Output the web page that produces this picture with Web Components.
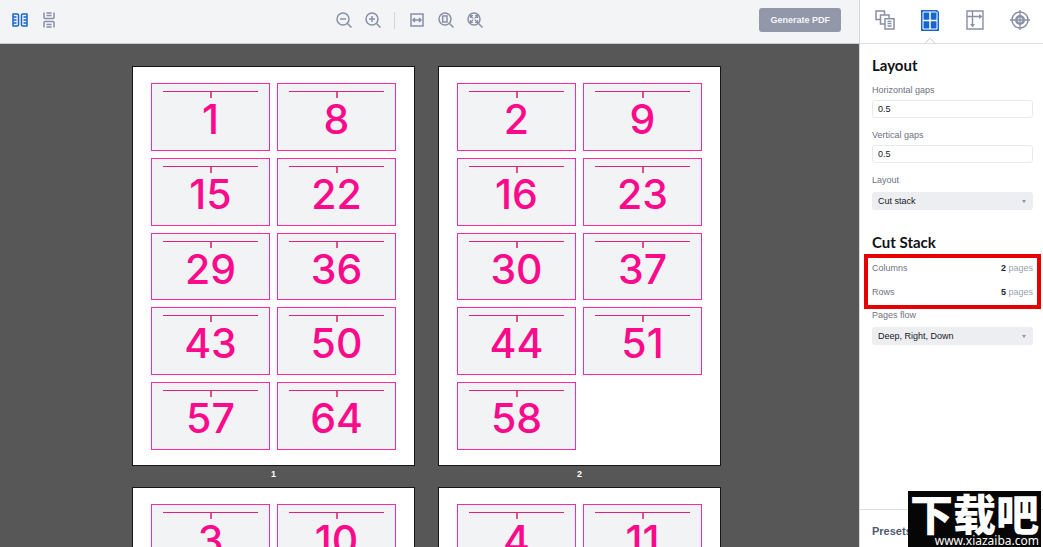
<!DOCTYPE html>
<html lang="en">
<head>
<meta charset="utf-8">
<title>Imposition</title>
<style>
html, body { height: 100%; margin: 0; }
body { font-family: "Liberation Sans", Arial, sans-serif; font-size: 9px; overflow: hidden; }
</style>
</head>
<body>
<imposition-app></imposition-app>
<script>
const define = (name, html, setup) => {
  const template = document.createElement('template');
  template.innerHTML = '<style>*{box-sizing:border-box}</style>' + html;
  customElements.define(name, class extends HTMLElement {
    constructor() {
      super();
      this.attachShadow({ mode: 'open' }).append(template.content.cloneNode(true));
    }
    connectedCallback() { if (setup) setup(this, this.shadowRoot); }
  });
};

/* Each icon: width, height, body */
const ICONS = {
  spread: [16, 14, '<path d="M.5 1H5q1.500 0 1.500 1v10q0 1-1.500 1H.5M15.500 1H11q-1.500 0-1.500 1v10q0 1 1.500 1h4.500M1 4h3.500M1 7h3.500M1 10h3.500M11.500 4H15M11.500 7H15M11.500 10H15M1 1v12M15 1v12"/>'],
  single: [12, 16, '<path d="M1 .5v5q0 1 1 1h8q1 0 1-1v-5M1 15.500v-5q0-1 1-1h8q1 0 1 1v5M3.500 1h5M3.500 3.500h5M3.500 12.500h5M3.500 15h5"/>'],
  minus: [16, 16, '<circle cx="7" cy="7" r="6"/><path d="M4 7h6M11.500 11.500l4 4"/>'],
  plus: [16, 16, '<circle cx="7" cy="7" r="6"/><path d="M4 7h6M7 4v6M11.500 11.500l4 4"/>'],
  width: [14, 14, '<path d="M1 1h12v12H1zM3 7h8M5 5L3 7l2 2M9 5l2 2-2 2"/>'],
  page: [16, 16, '<circle cx="7" cy="7" r="6"/><path d="M4.700 4H9v6H4.700zM11.500 11.500l4 4"/>'],
  fit: [16, 16, '<circle cx="7" cy="7" r="6"/><path stroke-width="1.200" d="M4 4l2.300 2.300M10 4L7.700 6.300M4 10l2.300-2.300M10 10L7.700 7.700M3.500 6V3.500H6M8 3.500h2.500V6M10.500 8v2.500H8M6 10.500H3.500V8"/><path d="M11.500 11.500l4 4"/>'],
  sheets: [20, 20, '<path d="M5.500 9.500H1V1h8.500v4M10 14H5.500V5H14v3.500M10 8.700h9V19h-9z"/><path d="M12.500 11.500h4M12.500 13.700h4M12.500 16h4" stroke-width="1.300"/>'],
  grid: [18, 21, '<path fill="currentColor" stroke="none" d="M0 0h16l2 2v19H0z"/><path d="M2 2h13.500l.5.500V19H2z" stroke="#fff" stroke-width="1"/><path d="M9 2v17M2 10.500h14" stroke="#fff" stroke-width="1.500"/>'],
  marks: [18, 20, '<path stroke-width="1.400" d="M1 1h16v18H1zM1 6.500h15M6.500 1v16"/><path d="M13 4l3 2.500L13 9zM4 14h5l-2.500 3z" fill="currentColor" stroke="none"/>'],
  target: [20, 20, '<circle cx="10" cy="10" r="8"/><circle cx="10" cy="10" r="3.600" stroke-width="2.800"/><path d="M10 7.500v5M7.500 10h5" stroke="#fff" stroke-width="2.400"/><path d="M10 0v20M0 10h20" stroke-width="1.300"/>']
};
define('app-icon', `<style>
:host{display:block;flex:none}
span{display:block}
svg{display:block;fill:none;stroke:currentColor;stroke-width:1.5}
</style><span></span>`, (el, root) => {
  const [w, h, body] = ICONS[el.getAttribute('name')];
  root.querySelector('span').innerHTML = `<svg width="${w}" height="${h}" viewBox="0 0 ${w} ${h}" aria-hidden="true">${body}</svg>`;
});

define('icon-button', `<style>
:host{display:block;width:29px;height:29px;color:#8890a6}
:host([active]){color:#1765cf}
button{display:grid;place-items:center;width:100%;height:100%;padding:0;border:0;background:none;color:inherit}
</style><button type="button"></button>`, (el, root) => {
  const button = root.querySelector('button');
  button.setAttribute('aria-label', el.getAttribute('label'));
  const icon = document.createElement('app-icon');
  icon.setAttribute('name', el.getAttribute('name'));
  button.replaceChildren(icon);
});

define('top-toolbar', `<style>
:host{display:flex;align-items:center;justify-content:space-between;height:44px;padding:0 18px 3px 5px;background:#f2f4f6;border-bottom:1px solid #c9ced2}
div{display:flex;align-items:center}
.zoom{margin-right:4px}
i{width:1px;height:17px;margin:0 7px;background:#d2d6dc}
.primary{height:24px;padding:0 11px;border:0;border-radius:3px;background:#9297a9;color:#f4f5f8;font:bold 9px/24px "Liberation Sans",Arial,sans-serif}
</style>
<div><icon-button name="spread" label="Spread view" active></icon-button><icon-button name="single" label="Continuous view"></icon-button></div>
<div class="zoom"><icon-button name="minus" label="Zoom out"></icon-button><icon-button name="plus" label="Zoom in"></icon-button><i></i><icon-button name="width" label="Fit width"></icon-button><icon-button name="page" label="Fit page"></icon-button><icon-button name="fit" label="Fit all"></icon-button></div>
<button class="primary" type="button">Generate PDF</button>`);

define('page-card', `<style>
:host{display:flex;flex-direction:column;align-items:center;border:1px solid #ff2a9d;background:#f1f3f5;min-height:0;padding:7px 11px 0;color:#fb0a8b}
i{width:100%;height:1px;background:#e0207f;flex:none}
b{width:2px;height:6px;background:#e0508f;flex:none}
span{font:500 41px/42px Inter,Roboto,sans-serif}
</style><i></i><b></b><span><slot></slot></span>`);

define('sheet-preview', `<style>
:host{display:block}
figure{margin:0}
.sheet{display:grid;grid-template:repeat(5,1fr)/repeat(2,1fr);gap:7px;height:398px;padding:16px 18px 15px;background:#fff;outline:1px solid #161616}
figcaption{height:23px;font-weight:bold;line-height:18px;text-align:center;color:#fff}
</style><figure><div class="sheet"></div><figcaption></figcaption></figure>`, (el, root) => {
  root.querySelector('.sheet').replaceChildren(...el.getAttribute('pages').split(' ').map(n => {
    const card = document.createElement('page-card');
    card.textContent = n;
    return card;
  }));
  root.querySelector('figcaption').textContent = el.getAttribute('number');
});

define('sheet-stage', `<style>
:host{display:grid;grid-template-columns:repeat(2,281px);justify-content:center;align-content:start;column-gap:25px;min-height:0;overflow:hidden;padding:23px 6px 0 0;background:#575757}
</style>
<sheet-preview number="1" pages="1 8 15 22 29 36 43 50 57 64"></sheet-preview>
<sheet-preview number="2" pages="2 9 16 23 30 37 44 51 58"></sheet-preview>
<sheet-preview number="3" pages="3 10"></sheet-preview>
<sheet-preview number="4" pages="4 11"></sheet-preview>`);

const FIELD = `:host{display:block}
label{display:block;line-height:12px;color:#6e737f}`;
define('text-field', `<style>${FIELD}
input{display:block;width:100%;height:18px;margin-top:4px;padding:0 5px;border:1px solid #e8eaee;border-radius:3px;background:#fff;color:#17181c;font:inherit}
</style><label for="f"></label><input id="f" type="text">`, (el, root) => {
  root.querySelector('label').textContent = el.getAttribute('label');
  root.querySelector('input').value = el.getAttribute('value');
});
define('select-field', `<style>${FIELD}
div{display:grid;align-items:center;margin-top:6px;border-radius:3px;background:#eceef1}
select,svg{grid-area:1/1}
select{appearance:none;width:100%;height:18px;padding:0 6px;border:0;background:none;color:#17181c;font:inherit}
svg{justify-self:end;margin-right:7px;fill:#8d93a3;pointer-events:none}
</style><label for="f"></label><div><select id="f"><option></option></select><svg width="4" height="3" viewBox="0 0 4 3" aria-hidden="true"><path d="M0 0h4L2 3z"/></svg></div>`, (el, root) => {
  root.querySelector('label').textContent = el.getAttribute('label');
  root.querySelector('option').textContent = el.getAttribute('value');
});
define('count-row', `<style>
:host{display:flex;justify-content:space-between;line-height:24px;color:#6e737f}
b{color:#22242b}
.unit{color:#9a9fae}
</style><span class="name"></span><span class="unit"><b></b> pages</span>`, (el, root) => {
  root.querySelector('.name').textContent = el.getAttribute('label');
  root.querySelector('b').textContent = el.getAttribute('value');
});

define('side-tabs', `<style>
:host{display:flex;height:44px;padding:0 0 3px 2px;border-bottom:1px solid #dcdee2}
icon-button{flex:1;height:40px;position:relative}
icon-button[active]::after{content:"";position:absolute;left:50%;bottom:-7px;width:7px;height:7px;margin-left:-4px;border:solid #cfd2d8;border-width:1px 0 0 1px;background:#fff;transform:rotate(45deg);clip-path:polygon(0 0,100% 0,0 100%)}
</style><icon-button name="sheets" label="Pages"></icon-button><icon-button name="grid" label="Layout" active></icon-button><icon-button name="marks" label="Margins"></icon-button><icon-button name="target" label="Marks"></icon-button>`);

define('side-panel', `<style>
:host{display:flex;flex-direction:column;min-height:0;border-left:1px solid #d5d8dc;background:#fff}
section{padding:11px 10px 0 12px}
section + section{padding-top:22px}
h2{margin:0;font:bold 15px/20px Lato,sans-serif;color:#111216}
.fields{display:grid;gap:11px;padding-top:9px}
.counts{position:relative;margin:4px 0 5px}
.counts::after{content:"";position:absolute;inset:-2px -8px -5px;border:4px solid #e60000;pointer-events:none}
footer{margin-top:auto;height:38px;padding-left:12px;border-top:1px solid #dcdee2;font-weight:bold;font-size:11px;line-height:42px;color:#4f5a70}
</style>
<side-tabs></side-tabs>
<section><h2>Layout</h2><div class="fields">
<text-field label="Horizontal gaps" value="0.5"></text-field>
<text-field label="Vertical gaps" value="0.5"></text-field>
<select-field label="Layout" value="Cut stack"></select-field></div></section>
<section><h2>Cut Stack</h2>
<div class="counts"><count-row label="Columns" value="2"></count-row><count-row label="Rows" value="5"></count-row></div>
<select-field label="Pages flow" value="Deep, Right, Down"></select-field></section>
<footer>Presets</footer>`);

define('site-badge', `<style>
:host{position:absolute;right:2px;bottom:0;width:133px;height:56px;background:#060606;color:#fff;overflow:hidden}
strong{display:block;height:42px;font:900 43px/42px "Noto Sans CJK SC",sans-serif;text-align:center;white-space:nowrap}
span{display:block;padding-right:2px;font:12px/16px "Noto Sans","Open Sans",sans-serif;text-align:right}
</style><strong lang="zh">下载吧</strong><span>www.xiazaiba.com</span>`);

define('imposition-app', `<style>
:host{position:relative;display:grid;grid-template:auto 1fr/1fr 184px;height:100vh;overflow:hidden}
side-panel{grid-area:1/2/3/3}
sheet-stage{grid-area:2/1}
</style><top-toolbar></top-toolbar><sheet-stage></sheet-stage><side-panel></side-panel><site-badge></site-badge>`);
</script>
</body>
</html>
